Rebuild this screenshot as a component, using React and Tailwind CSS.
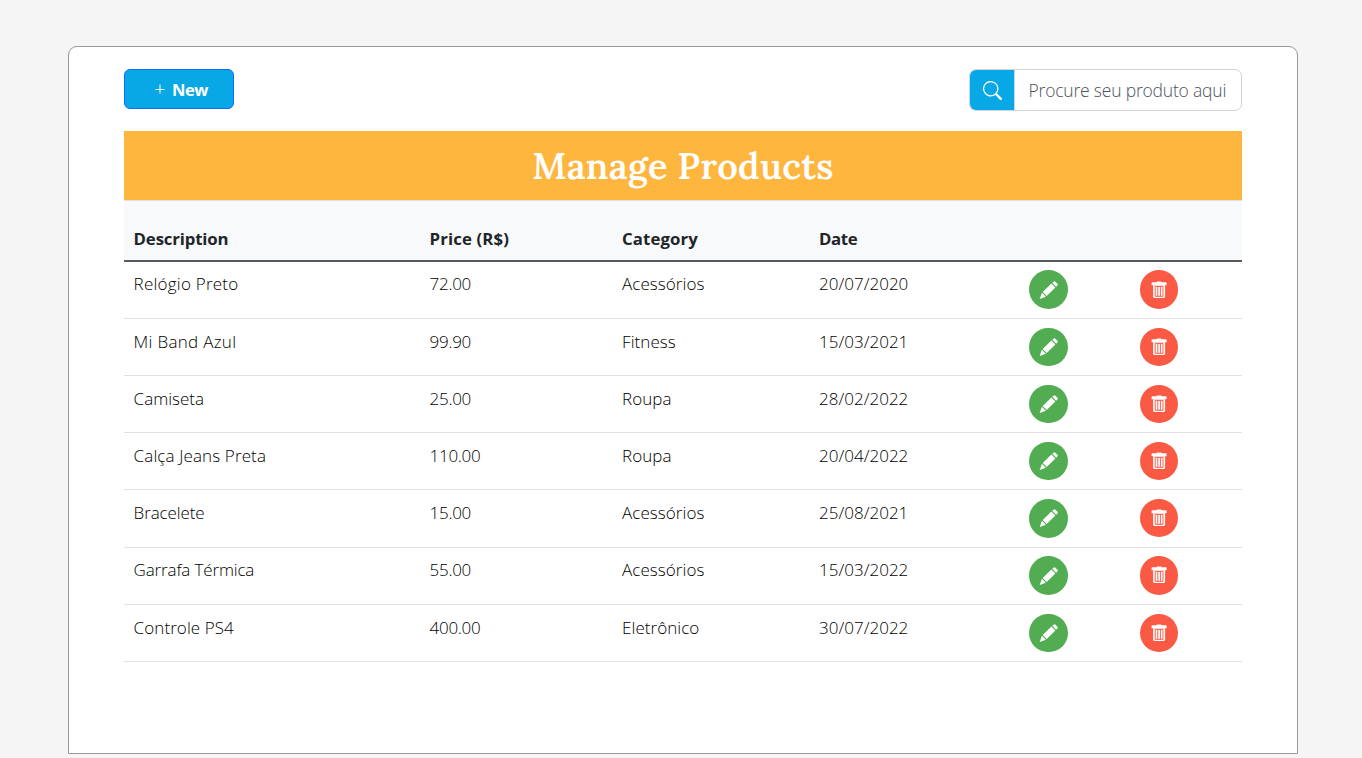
import React from "react";
import { BsSearch } from "react-icons/bs";

const products = [
  ["Relógio Preto", "72.00", "Acessórios", "20/07/2020", "tracking-[0.23px]"],
  ["Mi Band Azul", "99.90", "Fitness", "15/03/2021", "tracking-[0.3px]"],
  ["Camiseta", "25.00", "Roupa", "28/02/2022", "tracking-normal"],
  ["Calça Jeans Preta", "110.00", "Roupa", "20/04/2022", "tracking-[0.12px]"],
  ["Bracelete", "15.00", "Acessórios", "25/08/2021", "tracking-[-0.12px]"],
  ["Garrafa Térmica", "55.00", "Acessórios", "15/03/2022", "tracking-[-0.15px]"],
  ["Controle PS4", "400.00", "Eletrônico", "30/07/2022", "tracking-[0.08px]"],
];

const columns = "grid grid-cols-[296px_192.5px_197px_210px_111px_1fr]";

function PencilIcon() {
  return (
    <svg viewBox="0 0 20 20" className="size-5 overflow-visible" fill="#fff">
      <path d="M14.3 2.7 15.9 1.4Q16.5 1 17.1 1.5L19.6 3.9Q20.1 4.5 19.7 5.1L18.2 6.8zM13.4 3.5 17.4 7.5 8.7 16 4.7 12zM3.9 12.8 7.9 16.8 1.7 19.1z" />
    </svg>
  );
}

function TrashIcon() {
  return (
    <svg viewBox="0 0 16 18" className="h-[18px] w-4" fill="none">
      <path d="M.6 2Q.6 1.3 1.3 1.3H5.8V.4H10.4V1.3H14.9Q15.6 1.3 15.6 2V4.3H.6z" fill="#fff" />
      <path d="M2.1 4.2H14.1V15.6Q14.1 17 12.7 17H3.5Q2.1 17 2.1 15.6z" fill="#fff" />
      <path d="M4.2 5.4H12V15.3H4.2zM6.8 5.4V15.3M9.4 5.4V15.3" stroke="#fa5944" strokeWidth=".95" />
    </svg>
  );
}

export default function App() {
  return (
    <div className="h-[758px] overflow-hidden bg-[#f5f5f5] pl-[68px] pt-[46px] font-['Open_Sans','Noto_Sans',sans-serif] text-[#212529]">
      <main className="h-[708px] w-[1230px] rounded-t-[9px] border border-[#999] bg-white px-[55px] pt-[22px]">
        <div className="flex h-[62px] items-start justify-between">
          <button className="flex h-10 w-[110px] items-center rounded-md border border-[#0d6efd] bg-[#08a7e5] pl-[30px] text-white">
            <svg viewBox="0 0 10 10" className="size-[10px]" stroke="#fff" strokeWidth="1">
              <path d="M.5 5.5H9.5M5 .5V9.5" />
            </svg>
            <span className="pl-[7px] pt-[2px] text-[16.5px] font-bold tracking-[-0.4px]">New</span>
          </button>
          <div className="flex h-[42px] w-[273px] overflow-hidden rounded-[7px] border border-[#ced4da]">
            <div className="flex w-11 shrink-0 items-center justify-center bg-[#08a7e5]">
              <BsSearch className="size-[19px] text-white" />
            </div>
            <input
              className="min-w-0 flex-1 border-l border-[#ced4da] pl-[13.5px] pt-px text-[17.5px] font-light tracking-[-0.2px] outline-none placeholder:text-[#4b535b]"
              placeholder="Procure seu produto aqui"
            />
          </div>
        </div>
        <h1 className="flex h-[69px] items-center justify-center bg-[#ffb63f] font-['Lora','Noto_Serif','DejaVu_Serif','Liberation_Serif',serif] text-[36px] font-semibold tracking-[0.33px] text-white">
          Manage Products
        </h1>
        <div className={`${columns} h-[61.6px] border-b-2 border-t border-b-[#58595b] border-t-[#dee2e6] bg-[#f8f9fa] pl-[9.6px] pt-[25px] text-[16.8px] font-bold leading-[26px]`}>
          <span className="tracking-[-0.15px]">Description</span>
          <span className="tracking-[0.12px]">Price (R$)</span>
          <span className="tracking-[0.08px]">Category</span>
          <span className="tracking-[-0.4px]">Date</span>
        </div>
        {products.map(([name, price, category, date, tracking]) => (
          <div key={name} className={`${columns} h-[57.2px] border-b border-[#dee2e6] pl-[9.6px] pt-[8.8px] text-[17px] font-light leading-[27px] text-black`}>
            <span className={tracking}>{name}</span>
            <span className="tracking-[-0.3px]">{price}</span>
            <span className="tracking-[0.05px]">{category}</span>
            <span>{date}</span>
            <button className="flex size-[38.5px] items-center justify-center rounded-full bg-[#52ad52]">
              <PencilIcon />
            </button>
            <button className="flex size-[38.3px] items-center justify-center rounded-full bg-[#fa5944]">
              <TrashIcon />
            </button>
          </div>
        ))}
      </main>
    </div>
  );
}
